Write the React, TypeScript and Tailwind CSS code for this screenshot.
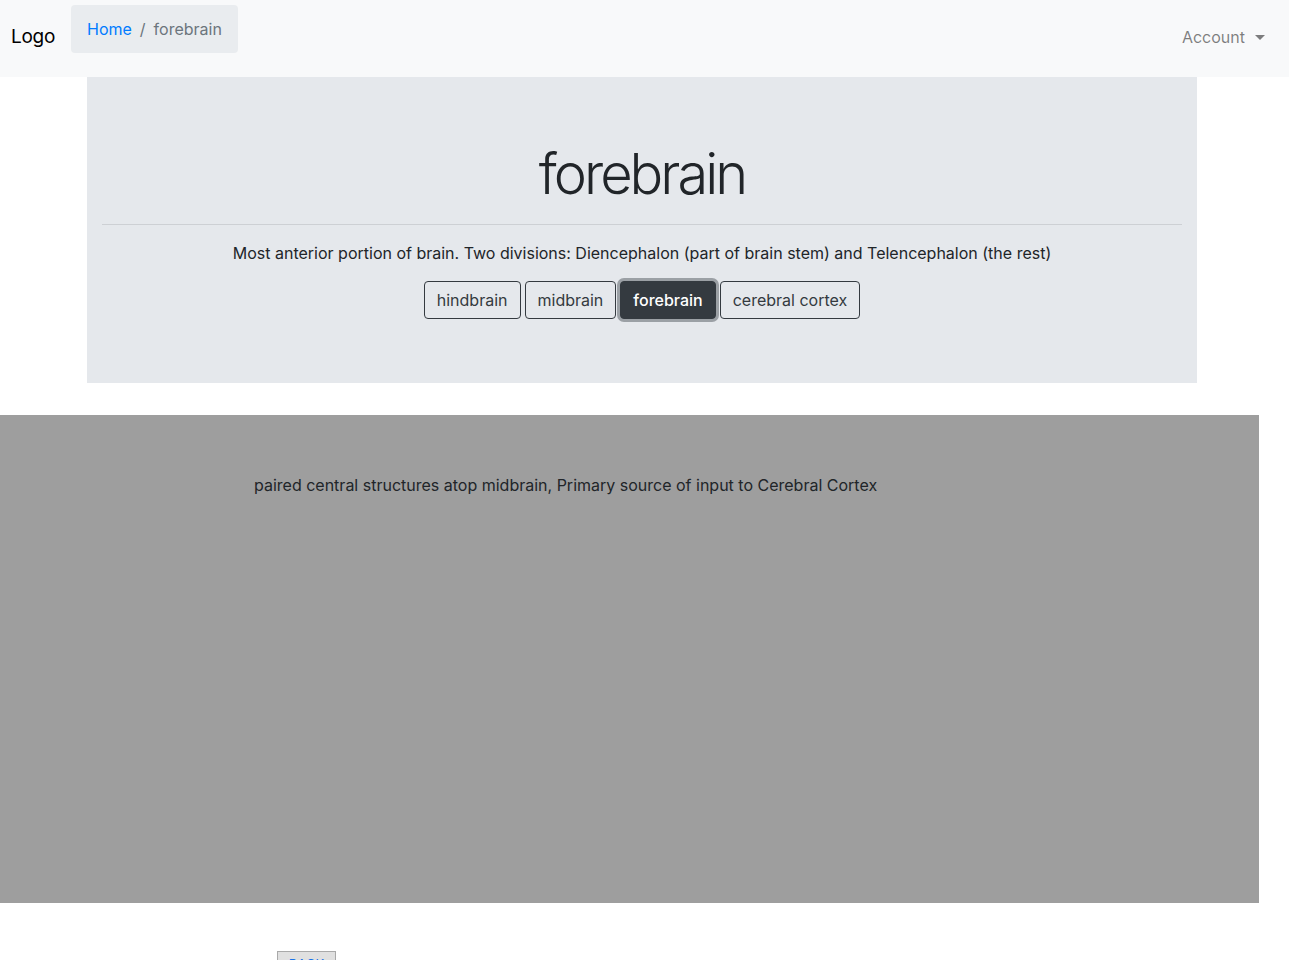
import React from "react";

export default function App() {
  const font = { fontFamily: 'Inter, "Liberation Sans", Arial, sans-serif' };
  return (
    <div className="min-h-[960px] bg-white text-[#212529] text-[16px] overflow-hidden" style={font}>
      <nav className="h-[77px] bg-[#f8f9fa] flex items-start">
        <div className="ml-[11px] mt-[24px] text-[19px] leading-[26px] tracking-[-0.3px] text-black">Logo</div>
        <div className="ml-[16px] mt-[5px] h-[48px] px-4 flex items-center rounded bg-[#e9ecef] text-[16px]">
          <span className="text-[#007bff]">Home</span>
          <span className="px-2 text-[#6c757d]">/</span>
          <span className="text-[#6c757d]">forebrain</span>
        </div>
        <div className="ml-auto mr-[24px] mt-[26px] flex items-center text-[16px] text-[rgba(0,0,0,0.5)] leading-[22px]">
          <span>Account</span>
          <span className="ml-[10px] w-0 h-0 border-x-[5px] border-x-transparent border-t-[5px] border-t-[rgba(0,0,0,0.5)]" />
        </div>
      </nav>
      <div className="ml-[87px] w-[1110px] bg-[#e5e8ec] px-[15px] pt-[64px] pb-[64px] text-center">
        <h1 className="text-[56px] font-light leading-[67px] tracking-[-3px]">forebrain</h1>
        <hr className="mt-[16px] mb-[16px] border-t border-[rgba(0,0,0,0.1)]" />
        <p className="leading-[24px] mb-[16px]">
          Most anterior portion of brain. Two divisions: Diencephalon (part of brain stem) and Telencephalon (the rest)
        </p>
        <div className="flex justify-center gap-[4px]">
          {["hindbrain", "midbrain", "forebrain", "cerebral cortex"].map((b) =>
            b === "forebrain" ? (
              <button
                key={b}
                className="h-[38px] px-3 rounded border border-[#343a40] bg-[#343a40] text-white font-medium shadow-[0_0_0_3px_rgba(82,88,93,0.5)]"
              >
                {b}
              </button>
            ) : (
              <button key={b} className="h-[38px] px-3 rounded border border-[#343a40] text-[#343a40]">
                {b}
              </button>
            )
          )}
        </div>
      </div>
      <div className="mt-[32px] w-[1259px] h-[488px] bg-[#9e9e9e] pt-[58px] pl-[254px]">
        <p className="leading-[24px] text-[#212529]">
          paired central structures atop midbrain, Primary source of input to Cerebral Cortex
        </p>
      </div>
      <div className="mt-[48px] ml-[277px] h-[9px]">
        <button className="w-[59px] h-[24px] border border-[#a9a9a9] bg-[#e0e0e0] text-[#1a73e8] text-[13px] leading-[20px] align-top pt-[1px]">
          BACK
        </button>
      </div>
    </div>
  );
}
